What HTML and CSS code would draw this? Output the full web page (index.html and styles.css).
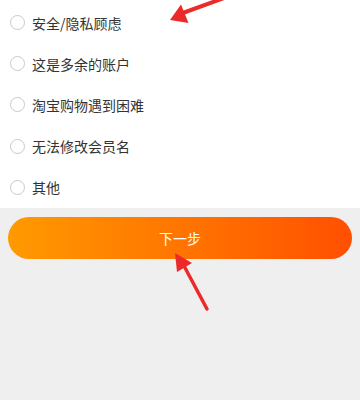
FILE: index.html
```html
<!DOCTYPE html>
<html lang="zh">
<head>
<meta charset="utf-8">
<link rel="stylesheet" href="styles.css">
</head>
<body>
<div class="page">
  <ul class="options">
    <li class="option"><span class="radio"></span><span class="label">安全/隐私顾虑</span></li>
    <li class="option"><span class="radio"></span><span class="label">这是多余的账户</span></li>
    <li class="option"><span class="radio"></span><span class="label">淘宝购物遇到困难</span></li>
    <li class="option"><span class="radio"></span><span class="label">无法修改会员名</span></li>
    <li class="option"><span class="radio"></span><span class="label">其他</span></li>
  </ul>
  <div class="actions">
    <button class="next">下一步</button>
  </div>
  <svg class="arrows" width="360" height="400" viewBox="0 0 360 400">
    <line x1="224" y1="-2" x2="180" y2="14" stroke="#ec2a2a" stroke-width="4" stroke-linecap="round"/>
    <polygon points="170,20 181,4.5 188.5,23" fill="#ec2a2a"/>
    <line x1="207" y1="309" x2="183" y2="264" stroke="#ec2a2a" stroke-width="3.5" stroke-linecap="round"/>
    <polygon points="175,253 177,272 192,263" fill="#ec2a2a"/>
  </svg>
</div>
</body>
</html>
```
FILE: styles.css
```css
html, body {
  margin: 0;
  padding: 0;
  background: #efefef;
}
body {
  font-family: "Noto Sans CJK SC", "Noto Sans", sans-serif;
  width: 360px;
  height: 400px;
  overflow: hidden;
}
.page {
  position: relative;
  width: 360px;
  height: 400px;
}
.options {
  list-style: none;
  margin: 0;
  padding: 2px 0 0;
  background: #ffffff;
}
.option {
  display: flex;
  align-items: center;
  height: 41.2px;
  padding-left: 10px;
}
.radio {
  width: 13px;
  height: 13px;
  border: 1px solid #c9c9c9;
  border-radius: 50%;
  box-sizing: content-box;
  margin-right: 7px;
}
.label {
  font-size: 14px;
  color: #333333;
  line-height: 1;
}
.actions {
  padding: 9px 8px 0;
}
.next {
  display: block;
  width: 100%;
  height: 42px;
  border: none;
  border-radius: 21px;
  background: linear-gradient(to right, #ff9a00, #ff5000);
  color: #ffffff;
  font-family: "Noto Sans CJK SC", "Noto Sans", sans-serif;
  font-size: 14px;
  padding: 0;
}
.arrows {
  position: absolute;
  left: 0;
  top: 0;
  pointer-events: none;
}
```
